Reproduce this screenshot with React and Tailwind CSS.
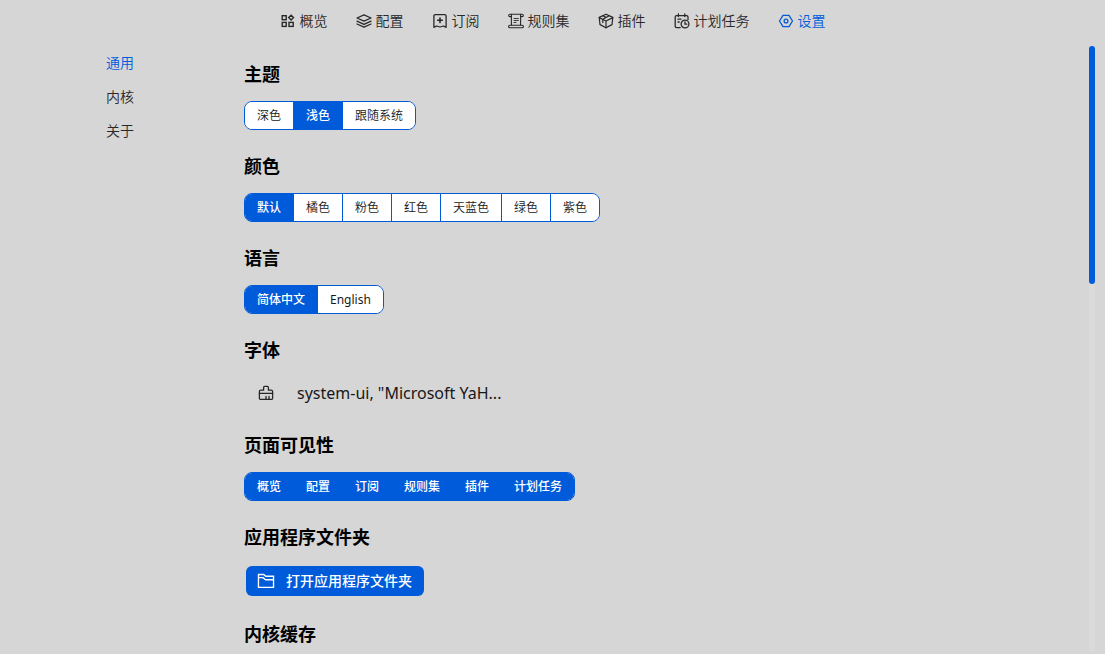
import React, { useState } from "react";

function Icon({ children, className = "size-4" }) {
  return (
    <svg
      viewBox="0 0 16 16"
      className={`${className} shrink-0`}
      fill="none"
      stroke="currentColor"
      strokeWidth="1.3"
      strokeLinejoin="round"
      strokeLinecap="round"
      aria-hidden="true"
    >
      {children}
    </svg>
  );
}

const OverviewIcon = () => (
  <Icon>
    <g strokeLinejoin="miter" strokeWidth="1.4">
      <rect x="2.2" y="2.7" width="4" height="4" />
      <rect x="2.2" y="9.4" width="4" height="4" />
      <rect x="9" y="9.4" width="4.2" height="4" />
      <path d="M11.1 2.2 13.5 4.6 11.1 7 8.7 4.6Z" />
    </g>
  </Icon>
);

const ProfilesIcon = () => (
  <Icon>
    <path d="M8 1.8 15 5 8 8.2 1 5Z" />
    <path d="M1 8.2 8 11.4 15 8.2" />
    <path d="M1 11 8 14.2 15 11" />
  </Icon>
);

const SubscriptionIcon = () => (
  <Icon>
    <path d="M3.2 1.6H12.8A1.3 1.3 0 0 1 14.1 2.9V14.3L11.4 13 8 14 4.6 13 1.9 14.3V2.9A1.3 1.3 0 0 1 3.2 1.6Z" />
    <path d="M8 5V9.6M5.7 7.3H10.3" strokeWidth="1.6" />
  </Icon>
);

const RulesetIcon = () => (
  <Icon>
    <g strokeWidth="1.1">
      <path d="M3.4 3.6H1.9A1.1 1.1 0 0 1 1.9 1.2H14.1A1.1 1.1 0 0 1 14.1 3.6H12.6" />
      <path d="M3.4 1.4V12M12.6 1.4V12" />
      <path d="M1.9 12.2H14.1A1.1 1.1 0 0 1 14.1 14.8H1.9A1.1 1.1 0 0 1 1.9 12.2Z" />
      <path d="M6 5.5H10.4M6 7.5H10.4M6 9.5H8" strokeWidth="0.9" />
    </g>
  </Icon>
);

const PluginIcon = () => (
  <Icon>
    <g strokeWidth="1.2">
      <path d="M8 1.2 14.8 4.4 14 11.6 8 14.8 2 11.6 1.2 4.4Z" />
      <path d="M1.2 4.6 8 8 14.8 4.6M8 8V14.8M11.2 2.8 4.8 6.2V9.6M4.8 2.8 8 4.4" />
    </g>
  </Icon>
);

const TaskIcon = () => (
  <Icon>
    <path d="M6.2 14.6H2.6A1.4 1.4 0 0 1 1.2 13.2V4A1.4 1.4 0 0 1 2.6 2.6H12.6A1.4 1.4 0 0 1 14 4V6.6" />
    <path d="M4.4 1V3.6M10.8 1V3.6M4 6.2H7M4 9H5.2" />
    <circle cx="11" cy="11" r="3.9" />
    <path d="M11 9V11.2H12.8" />
  </Icon>
);

const SettingsIcon = () => (
  <Icon>
    <path d="M5 2.3H11L14.5 8 11 13.7H5L1.5 8Z" />
    <circle cx="8" cy="8" r="1.9" />
  </Icon>
);

const ClearIcon = () => (
  <Icon>
    <path d="M5.6 5.2V2.4A1 1 0 0 1 6.6 1.4H9.4A1 1 0 0 1 10.4 2.4V5.2H13.2A1.4 1.4 0 0 1 14.6 6.6V13.2A1.2 1.2 0 0 1 13.4 14.4H2.6A1.2 1.2 0 0 1 1.4 13.2V6.6A1.4 1.4 0 0 1 2.8 5.2H5.6" />
    <path d="M1.4 8.4H14.6M8 11.4V14M11 11.4V14" />
  </Icon>
);

const FolderIcon = () => (
  <Icon className="size-[18px]">
    <path
      d="M1.3 13.7V2.2H6L7.8 3.8H14.7V13.7ZM1.3 5H5.4L7.6 6.9H14.7"
      strokeLinejoin="miter"
      strokeWidth="1.2"
    />
  </Icon>
);

const navItems = [
  { label: "概览", icon: OverviewIcon },
  { label: "配置", icon: ProfilesIcon },
  { label: "订阅", icon: SubscriptionIcon },
  { label: "规则集", icon: RulesetIcon },
  { label: "插件", icon: PluginIcon },
  { label: "计划任务", icon: TaskIcon },
  { label: "设置", icon: SettingsIcon },
];

const pages = ["概览", "配置", "订阅", "规则集", "插件", "计划任务"];

// Latin labels need the regular weight to read as dark as the Chinese ones.
const idleWeight = (text) => (/^[a-z]/i.test(text) ? "font-normal" : "font-[350]");

function ButtonGroup({ label, options, selected, onPick }) {
  return (
    <div
      role="group"
      aria-label={label}
      className="flex w-fit divide-x divide-[#005bdb] overflow-hidden rounded-lg border border-[#005bdb]"
    >
      {options.map((option) => {
        const active = selected.includes(option);
        return (
          <button
            key={option}
            type="button"
            aria-pressed={active}
            onClick={() => onPick(option)}
            className={`px-3 text-xs leading-[27px] whitespace-nowrap ${
              active
                ? "bg-[#005bdb] font-medium text-white"
                : `bg-white text-[#181818] ${idleWeight(option)}`
            }`}
          >
            {option}
          </button>
        );
      })}
    </div>
  );
}

function Section({ title, children }) {
  return (
    <section className="flex flex-col items-start gap-[13px]">
      <h2 className="text-lg leading-7 font-bold text-black">{title}</h2>
      {children}
    </section>
  );
}

export default function App() {
  const [nav, setNav] = useState("设置");
  const [tab, setTab] = useState("通用");
  const [theme, setTheme] = useState("浅色");
  const [color, setColor] = useState("默认");
  const [lang, setLang] = useState("简体中文");
  const [visible, setVisible] = useState(pages);

  const togglePage = (page) =>
    setVisible((list) =>
      list.includes(page) ? list.filter((p) => p !== page) : [...list, page]
    );

  return (
    <div className="flex h-screen flex-col overflow-hidden bg-[#d6d6d6] font-['Noto_Sans','Noto_Sans_CJK_SC',sans-serif] text-sm font-[350] text-[#282828]">
      <nav className="flex h-[42px] shrink-0 items-center justify-center gap-7">
        {navItems.map(({ label, icon: NavIcon }) => (
          <a
            key={label}
            href="#"
            onClick={() => setNav(label)}
            className={`flex items-center gap-1 whitespace-nowrap ${
              nav === label ? "text-[#005bdb]" : ""
            }`}
          >
            <NavIcon />
            {label}
          </a>
        ))}
      </nav>

      <div className="flex min-h-0 flex-1 pt-1 pr-2.5">
        <aside className="flex w-60 shrink-0 flex-col items-center">
          {["通用", "内核", "关于"].map((item) => (
            <button
              key={item}
              type="button"
              onClick={() => setTab(item)}
              className={`leading-[34px] ${tab === item ? "text-[#005bdb]" : ""}`}
            >
              {item}
            </button>
          ))}
        </aside>

        <main className="flex min-w-0 flex-1 flex-col gap-[22px] overflow-hidden pt-3.5 pl-1">
          <Section title="主题">
            <ButtonGroup
              label="主题"
              options={["深色", "浅色", "跟随系统"]}
              selected={[theme]}
              onPick={setTheme}
            />
          </Section>
          <Section title="颜色">
            <ButtonGroup
              label="颜色"
              options={["默认", "橘色", "粉色", "红色", "天蓝色", "绿色", "紫色"]}
              selected={[color]}
              onPick={setColor}
            />
          </Section>
          <Section title="语言">
            <ButtonGroup
              label="语言"
              options={["简体中文", "English"]}
              selected={[lang]}
              onPick={setLang}
            />
          </Section>
          <Section title="字体">
            <div className="flex h-8 items-center gap-[23px] pl-3.5">
              <button type="button" aria-label="重置字体">
                <ClearIcon />
              </button>
              <span className="text-base font-normal text-[#181818]">
                system-ui, "Microsoft YaH...
              </span>
            </div>
          </Section>
          <Section title="页面可见性">
            <ButtonGroup
              label="页面可见性"
              options={pages}
              selected={visible}
              onPick={togglePage}
            />
          </Section>
          <Section title="应用程序文件夹">
            <button
              type="button"
              className="m-0.5 flex h-[30px] items-center gap-[11px] rounded-md bg-[#005bdb] px-3 pl-[11px] font-medium whitespace-nowrap text-white"
            >
              <FolderIcon />
              打开应用程序文件夹
            </button>
          </Section>
          <Section title="内核缓存" />
        </main>

        <div className="mb-0.5 w-1.5 shrink-0 rounded-full bg-[#dadada]">
          <div className="h-[238px] rounded-full bg-[#005bdb]" />
        </div>
      </div>
    </div>
  );
}
